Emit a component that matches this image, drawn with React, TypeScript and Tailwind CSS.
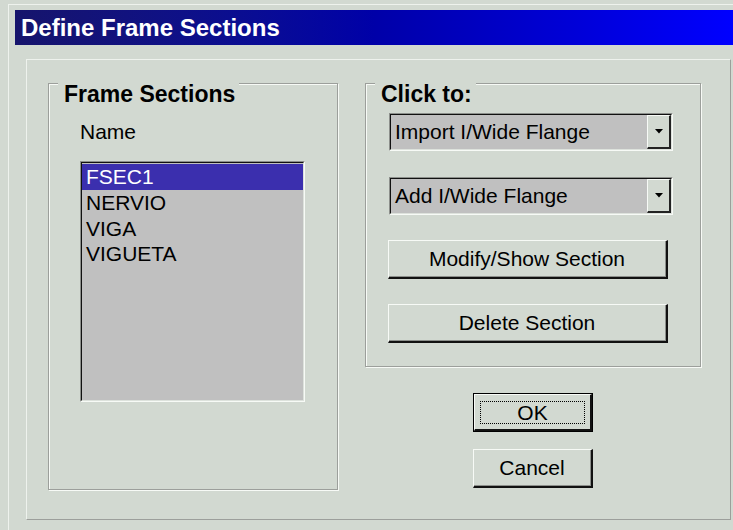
import React from 'react';

const SECTIONS = ['FSEC1', 'NERVIO', 'VIGA', 'VIGUETA'];

// classic etched frame with a caption sitting on the top edge
function GroupBox({
  title,
  className,
  children,
}: {
  title: string;
  className: string;
  children: React.ReactNode;
}) {
  return (
    <div
      className={`relative border border-[#9c9f9b] shadow-[inset_1px_1px_0_#f7faf6,1px_1px_0_#f7faf6] ${className}`}
    >
      <span className="absolute left-[9px] -top-[3px] bg-[#d2d9d1] pl-[6px] pr-[4px] text-[23px] font-bold leading-[26px] text-black">
        {title}
      </span>
      {children}
    </div>
  );
}

function RaisedButton({ label, className = '' }: { label: string; className?: string }) {
  return (
    <button
      className={`border-t border-l border-b-2 border-r-2 border-t-[#f7faf6] border-l-[#f7faf6] border-b-[#111] border-r-[#111] bg-[#d2d9d1] text-[21px] leading-none text-black ${className}`}
    >
      <div className="flex h-full w-full items-center justify-center border-b border-r border-b-[#8c8f8b] border-r-[#8c8f8b]">
        {label}
      </div>
    </button>
  );
}

function Combo({ value }: { value: string }) {
  return (
    <div className="h-[38px] w-[284px] border border-t-[#8c8f8b] border-l-[#8c8f8b] border-b-[#f7faf6] border-r-[#f7faf6]">
      <div className="flex h-full w-full border border-t-[#111] border-l-[#111] border-b-[#dde2dc] border-r-[#dde2dc] bg-[#c0c0c0]">
        <div className="flex flex-1 items-center pl-[4px] text-[21px] text-black">{value}</div>
        <div className="flex w-[24px] items-center justify-center border-t border-l border-b-2 border-r-2 border-t-[#f7faf6] border-l-[#f7faf6] border-b-[#222] border-r-[#222] bg-[#d2d9d1]">
          <svg width="8" height="5" viewBox="0 0 8 5">
            <path d="M0 0H8L4 4.5Z" fill="#000" />
          </svg>
        </div>
      </div>
    </div>
  );
}

export default function App() {
  return (
    <div className="h-[530px] w-[733px] overflow-hidden bg-[#d2d9d1] pl-[8px] pt-[4px] font-['Liberation_Sans',Arial,sans-serif]">
      <div className="h-full border-t border-l border-[#eef2ed] pl-[6px] pt-[5px]">
        {/* caption bar */}
        <div className="flex h-[35px] items-center bg-gradient-to-r from-[#16146c] via-[#0000a8] to-[#0000ff] pl-[6px] text-[24px] font-bold text-white">
          Define Frame Sections
        </div>

        {/* main panel */}
        <div className="ml-[11px] mt-[14px] flex h-[461px] w-[705px] border border-t-[#eef2ed] border-l-[#eef2ed] border-b-[#9c9f9b] border-r-[#9c9f9b] pl-[21px] pt-[23px]">
          <GroupBox title="Frame Sections" className="h-[407px] w-[290px] shrink-0 pl-[31px] pt-[36px]">
            <div className="text-[21px] leading-[24px] text-black">Name</div>
            <div className="mt-[17px] h-[241px] w-[225px] border border-t-[#8c8f8b] border-l-[#8c8f8b] border-b-[#f7faf6] border-r-[#f7faf6]">
              <div className="h-full w-full border border-t-[#111] border-l-[#111] border-b-[#dde2dc] border-r-[#dde2dc] bg-[#c0c0c0] pt-px">
                {SECTIONS.map((name, i) => (
                  <div
                    key={name}
                    className={
                      i === 0
                        ? 'h-[26px] bg-[#3b2fae] pl-[4px] text-[21px] leading-[26px] text-white'
                        : 'h-[25.5px] pl-[4px] text-[21px] leading-[25px] text-black'
                    }
                  >
                    {name}
                  </div>
                ))}
              </div>
            </div>
          </GroupBox>

          <div className="ml-[27px] flex flex-col items-center">
            <GroupBox title="Click to:" className="flex h-[284px] w-[336px] flex-col gap-[26px] pl-[23px] pt-[29px]">
              <Combo value="Import I/Wide Flange" />
              <Combo value="Add I/Wide Flange" />
              <RaisedButton label="Modify/Show Section" className="-ml-px -mt-px h-[39px] w-[280px]" />
              <RaisedButton label="Delete Section" className="-ml-px -mt-px h-[39px] w-[280px]" />
            </GroupBox>

            <button className="mt-[26px] h-[39px] w-[120px] border border-black bg-[#d2d9d1] p-0">
              <div className="h-full w-full border-t border-l border-b-2 border-r-2 border-t-[#f7faf6] border-l-[#f7faf6] border-b-[#111] border-r-[#111] px-[5px] pt-[6px] pb-[5px]">
                <div className="flex h-full w-full items-center justify-center border border-dotted border-black text-[21px] leading-none text-black">
                  OK
                </div>
              </div>
            </button>
            <RaisedButton label="Cancel" className="mt-[17px] h-[39px] w-[120px]" />
          </div>
        </div>
      </div>
    </div>
  );
}
